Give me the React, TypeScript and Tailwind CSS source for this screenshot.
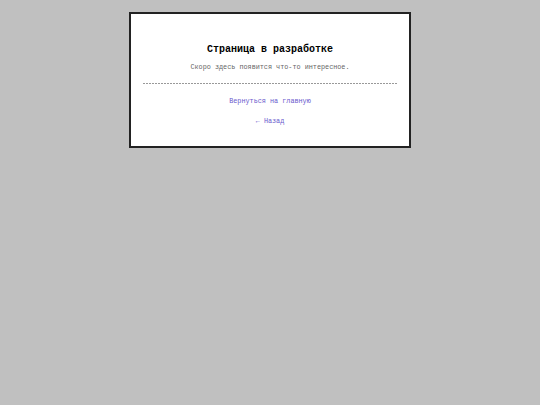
export default function App() {
  return (
    <div className="min-h-[405px] w-full bg-[#c0c0c0] pt-3 font-['Liberation_Mono',monospace]">
      <div className="mx-auto w-[282px] border-2 border-[#222] bg-white px-[12px] pt-[29px] pb-[20px] text-center">
        <h1 className="text-[10px] font-bold leading-[14px] text-black">Страница в разработке</h1>
        <p className="mt-[5px] text-[6.8px] leading-[10px] text-[#666]">Скоро здесь появится что-то интересное.</p>
        {/* dotted rule under the intro */}
        <div className="mt-[11px] h-px bg-[repeating-linear-gradient(90deg,#999_0_2px,transparent_2px_3px)]" />
        <div className="mt-[12px] text-[6.8px] leading-[10px]">
          <a href="#" className="text-[#6a5acd]">Вернуться на главную</a>
        </div>
        <div className="mt-[10px] text-[6.8px] leading-[10px]">
          <a href="#" className="text-[#6a5acd]">← Назад</a>
        </div>
      </div>
    </div>
  );
}
